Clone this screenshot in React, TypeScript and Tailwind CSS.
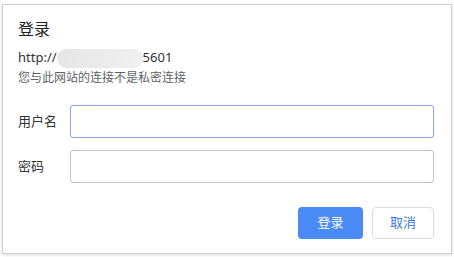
export default function App() {
  return (
    <div
      className="w-[454px] h-[257px] bg-white overflow-hidden"
      style={{ fontFamily: '"Noto Sans", "Noto Sans CJK SC", sans-serif' }}
    >
      <div className="ml-[2px] mt-[4px] w-[450px] h-[250px] border border-[#cfcfcf] bg-white shadow-[0_1px_3px_rgba(0,0,0,0.15)] pl-[15px] pr-[17px] flex flex-col">
        <div className="mt-[14px] h-[20px] leading-[20px] text-[16px] text-[#202124]">登录</div>
        <div className="mt-[10px] h-[18px] flex items-center text-[13px] text-[#333]">
          <span>http://</span>
          <span className="w-[86px] h-[19px] rounded-[9px] bg-gradient-to-r from-[#e6e6e6] via-[#ebebeb] to-[#f0f0f0]" />
          <span>5601</span>
        </div>
        <div className="mt-[3px] h-[16px] leading-[16px] text-[12px] text-[#5f6368]">您与此网站的连接不是私密连接</div>
        <div className="mt-[19px] flex items-center">
          <div className="w-[52px] text-[13px] text-[#333]">用户名</div>
          <div className="flex-1 h-[33px] rounded-[3px] border border-[#8ea6e0] shadow-[0_0_1px_rgba(66,133,244,0.4)]" />
        </div>
        <div className="mt-[12px] flex items-center">
          <div className="w-[52px] text-[13px] text-[#333]">密码</div>
          <div className="flex-1 h-[33px] rounded-[3px] border border-[#c3c3c3]" />
        </div>
        <div className="mt-[24px] flex justify-end gap-[9px]">
          <div className="w-[65px] h-[32px] rounded-[4px] bg-[#4a8af4] text-white text-[13px] flex items-center justify-center">登录</div>
          <div className="w-[62px] h-[32px] rounded-[4px] border border-[#dadce0] text-[#3b78e7] text-[13px] flex items-center justify-center">取消</div>
        </div>
      </div>
    </div>
  );
}
